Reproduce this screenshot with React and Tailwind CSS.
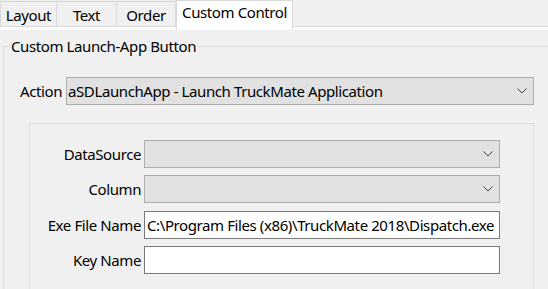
import React from 'react'

const font = { fontFamily: '"Noto Sans", "Open Sans", sans-serif' }

function Chevron() {
    return (
        <svg width="10" height="6" viewBox="0 0 10 6" className="shrink-0">
            <polyline points="0.5,0.5 5,5 9.5,0.5" fill="none" stroke="#444444" strokeWidth="1" />
        </svg>
    )
}

function Combo({ value, width }) {
    return (
        <div className={`flex h-[28px] items-center justify-between border border-[#adadad] bg-[#e1e1e1] pl-[1px] pr-[6px] ${width}`}>
            <span className="truncate text-[15px] tracking-[-0.4px] text-black">{value}</span>
            <Chevron />
        </div>
    )
}

function TextBox({ value }) {
    return (
        <div className="flex h-[28px] w-[356px] items-center border border-[#7a7a7a] bg-white pl-[2px]">
            <span className="whitespace-nowrap text-[15px] tracking-[-0.4px] text-black">{value}</span>
        </div>
    )
}

const tabs = ['Layout', 'Text', 'Order']
const tabWidths = ['w-[57px]', 'w-[60px]', 'w-[59px]']

export default function App() {
    const rows = [
        { label: 'DataSource', field: <Combo value="" width="w-[356px]" />, mt: 'mt-[16px]' },
        { label: 'Column', field: <Combo value="" width="w-[356px]" />, mt: 'mt-[7px]' },
        { label: 'Exe File Name', field: <TextBox value={'C:\\Program Files (x86)\\TruckMate 2018\\Dispatch.exe'} />, mt: 'mt-[8px]' },
        { label: 'Key Name', field: <TextBox value="" />, mt: 'mt-[7px]' },
    ]

    return (
        <div className="h-[289px] w-[548px] overflow-hidden bg-[#f0f0f0] text-black tracking-[-0.4px]" style={font}>
            {/* Tab strip */}
            <div className="flex h-[26px] items-start">
                {tabs.map((t, i) => (
                    <div
                        key={t}
                        className={`mt-[1px] flex h-[25px] items-center justify-center border-t border-r border-[#d9d9d9] bg-[#f0f0f0] pt-[2px] text-[15px] ${tabWidths[i]} ${i === 0 ? 'border-l' : ''}`}
                    >
                        {t}
                    </div>
                ))}
                <div className="relative z-10 flex h-[30px] w-[117px] items-start justify-center border-x border-t border-[#d9d9d9] bg-white text-[15px]">
                    Custom Control
                </div>
            </div>

            {/* Page */}
            <div className="border-t border-[#d9d9d9] bg-white pt-[3px]">
                <div className="h-[300px] bg-[#f0f0f0] pt-[5px]">
                    <fieldset className="ml-[3px] w-[570px] border border-[#dcdcdc]">
                        <legend className="ml-[7px] pr-[1px] text-[15px] leading-[22px]">Custom Launch-App Button</legend>

                        {/* Action row */}
                        <div className="mt-[20px] flex items-center pl-[16px]">
                            <span className="text-[15px]">Action</span>
                            <div className="ml-[4px]">
                                <Combo value="aSDLaunchApp - Launch TruckMate Application" width="w-[468px]" />
                            </div>
                        </div>

                        {/* Inner panel */}
                        <div className="ml-[25px] mt-[18px] h-[200px] w-[505px] border border-[#dcdcdc]">
                            {rows.map((r) => (
                                <div key={r.label} className={`flex items-center ${r.mt}`}>
                                    <span className="w-[111px] text-right text-[15px]">{r.label}</span>
                                    <div className="ml-[3px]">{r.field}</div>
                                </div>
                            ))}
                        </div>
                    </fieldset>
                </div>
            </div>
        </div>
    )
}
